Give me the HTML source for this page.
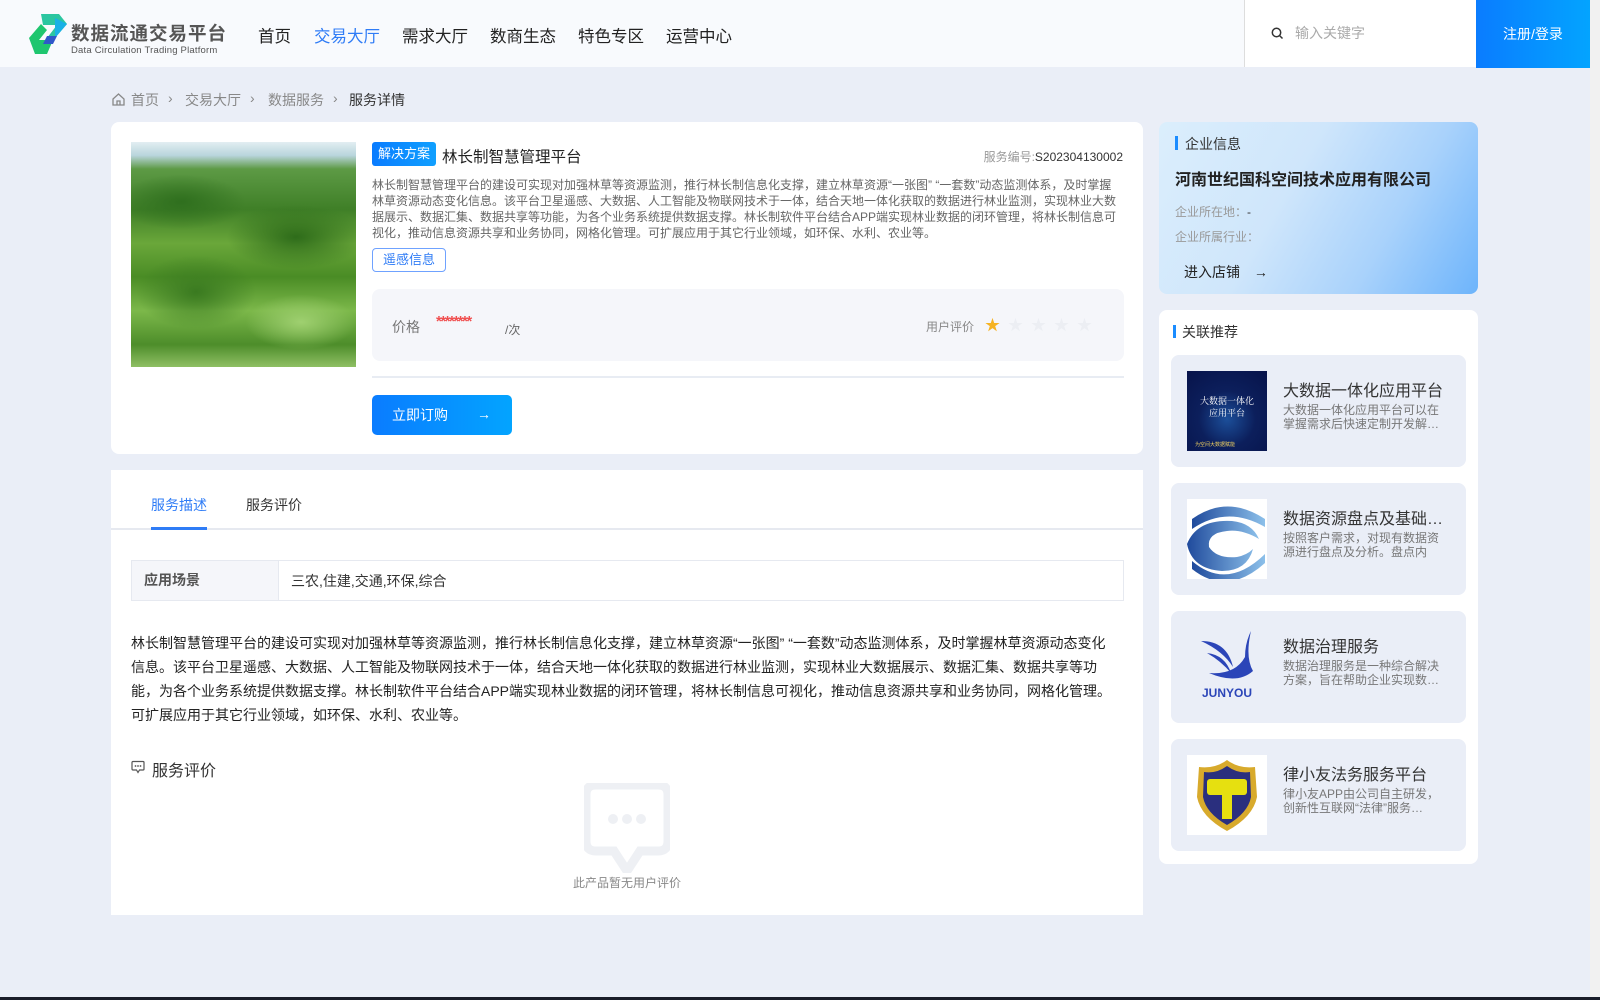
<!DOCTYPE html>
<html><head><meta charset="utf-8">
<style>
*{margin:0;padding:0;box-sizing:border-box}
body{width:1600px;height:1000px;background:#eaeef7;font-family:"Liberation Sans","Noto Sans CJK SC",sans-serif;color:#333;position:relative;overflow:hidden}
.abs{position:absolute}
.hdr{left:0;top:0;width:1590px;height:67px;background:#f8fafd}
.nav{top:23px;font-size:16.5px;color:#222}
.bc{top:90px;font-size:14px;color:#888}
.card{background:#fff;border-radius:8px}
.desc{font-size:12px;line-height:16px;color:#666}
.item{left:1171px;width:295px;height:112px;background:#eaeef7;border-radius:8px}
.item .pic{position:absolute;left:16px;top:16px;width:80px;height:80px;background:#fff;overflow:hidden}
.item .t{position:absolute;left:112px;top:22px;font-size:16px;color:#333;white-space:nowrap}
.item .d{position:absolute;left:112px;top:48px;width:166px;height:28px;overflow:hidden;font-size:12px;line-height:14px;color:#777}
</style></head><body>
<div class="abs hdr"></div>
<svg class="abs" style="left:29px;top:14px" width="40" height="40" viewBox="0 0 40 40">
<polygon points="12,0 30,0 38,10 26,24 18,24 28,11 14,11" fill="#2bc6a0"/>
<polygon points="26,4 38,10 26,24" fill="#19b1e6"/>
<polygon points="0,24 12,10 18,16 10,26 24,26 18,40 6,40" fill="#1fc66f"/>
<polygon points="18,22 28,22 24,30 14,30" fill="#2f58c9"/>
</svg>
<div class="abs" style="left:71px;top:20px;font-size:18.5px;font-weight:bold;color:#555;letter-spacing:1px">数据流通交易平台</div>
<div class="abs" style="left:71px;top:45px;font-size:9.5px;color:#555;letter-spacing:0.2px">Data Circulation Trading Platform</div>
<div class="abs nav" style="left:258px">首页</div>
<div class="abs nav" style="left:314px;color:#2f7cf6">交易大厅</div>
<div class="abs nav" style="left:402px">需求大厅</div>
<div class="abs nav" style="left:490px">数商生态</div>
<div class="abs nav" style="left:578px">特色专区</div>
<div class="abs nav" style="left:666px">运营中心</div>
<div class="abs" style="left:1244px;top:0;width:232px;height:67px;background:#fff;border-left:1px solid #ddd"></div>
<svg class="abs" style="left:1271px;top:27px" width="13" height="13" viewBox="0 0 13 13"><circle cx="5.5" cy="5.5" r="4.2" fill="none" stroke="#333" stroke-width="1.5"/><line x1="8.6" y1="8.6" x2="11.5" y2="11.5" stroke="#333" stroke-width="1.5"/></svg>
<div class="abs" style="left:1295px;top:23px;font-size:14px;color:#aaa">输入关键字</div>
<div class="abs" style="left:1476px;top:0;width:114px;height:68px;background:linear-gradient(90deg,#0a7cff,#03a4ff);color:#fff;font-size:14px;text-align:center;line-height:68px">注册/登录</div>
<div class="abs" style="left:1590px;top:0;width:10px;height:1000px;background:#f1f1f1"></div>
<div class="abs" style="left:0;top:997px;width:1600px;height:3px;background:#1a1d2a"></div>

<svg class="abs" style="left:111px;top:92px" width="15" height="15" viewBox="0 0 15 15"><path d="M2 7 L7.5 2 L13 7 V13 H2 Z M6 13 V9 H9 V13" fill="none" stroke="#888" stroke-width="1.3"/></svg>
<div class="abs bc" style="left:131px">首页</div>
<div class="abs bc" style="left:168px">›</div>
<div class="abs bc" style="left:185px">交易大厅</div>
<div class="abs bc" style="left:250px">›</div>
<div class="abs bc" style="left:268px">数据服务</div>
<div class="abs bc" style="left:333px">›</div>
<div class="abs bc" style="left:349px;color:#333">服务详情</div>

<div class="abs card" style="left:111px;top:122px;width:1032px;height:332px"></div>
<div class="abs" style="left:131px;top:142px;width:225px;height:225px;overflow:hidden;background:linear-gradient(180deg,#e2eef2 0%,#b9d5dc 6%,#5d9a45 12%,#3f7f27 30%,#6aa73a 45%,#4a8c25 60%,#7cb84a 75%,#4d8d2a 90%,#8fbf64 100%)">
<div style="position:absolute;left:-20px;top:30px;width:140px;height:60px;background:radial-gradient(ellipse,#2f6f1e 0%,transparent 65%)"></div>
<div style="position:absolute;left:90px;top:60px;width:150px;height:70px;background:radial-gradient(ellipse,#2e6c1a 0%,transparent 65%)"></div>
<div style="position:absolute;left:0;top:110px;width:130px;height:80px;background:radial-gradient(ellipse,#3a7a20 0%,transparent 65%)"></div>
<div style="position:absolute;left:110px;top:150px;width:120px;height:60px;background:radial-gradient(ellipse,#9fd070 0%,transparent 65%)"></div>
</div>
<div class="abs" style="left:372px;top:142px;width:64px;height:24px;background:linear-gradient(90deg,#0a7cff,#10a0ff);border-radius:3px;color:#fff;font-size:13px;line-height:24px;text-align:center">解决方案</div>
<div class="abs" style="left:442px;top:145px;font-size:15.5px;color:#222">林长制智慧管理平台</div>
<div class="abs" style="right:477px;top:148px;font-size:12px;color:#999">服务编号:<span style="color:#333">S202304130002</span></div>
<div class="abs desc" style="left:372px;top:177px;width:745px">林长制智慧管理平台的建设可实现对加强林草等资源监测，推行林长制信息化支撑，建立林草资源“一张图” “一套数”动态监测体系，及时掌握林草资源动态变化信息。该平台卫星遥感、大数据、人工智能及物联网技术于一体，结合天地一体化获取的数据进行林业监测，实现林业大数据展示、数据汇集、数据共享等功能，为各个业务系统提供数据支撑。林长制软件平台结合APP端实现林业数据的闭环管理，将林长制信息可视化，推动信息资源共享和业务协同，网格化管理。可扩展应用于其它行业领域，如环保、水利、农业等。</div>
<div class="abs" style="left:372px;top:248px;width:74px;height:24px;border:1px solid #6fa2ff;border-radius:4px;color:#2f7cf6;font-size:13px;line-height:22px;text-align:center">遥感信息</div>
<div class="abs" style="left:372px;top:289px;width:752px;height:72px;background:#f5f6fa;border-radius:8px"></div>
<div class="abs" style="left:392px;top:317px;font-size:14px;color:#777">价格</div>
<div class="abs" style="left:436px;top:315px;font-size:15px;color:#f05050;font-weight:bold;letter-spacing:-1.5px;line-height:14px">********</div>
<div class="abs" style="left:505px;top:321px;font-size:12px;color:#666">/次</div>
<div class="abs" style="left:926px;top:318px;font-size:12px;color:#888">用户评价</div>
<div class="abs" style="left:985px;top:314px;font-size:15px;letter-spacing:8px;color:#eceef3"><span style="color:#f6b322">★</span>★★★★</div>
<div class="abs" style="left:372px;top:376px;width:752px;height:2px;background:#e8ecf3"></div>
<div class="abs" style="left:372px;top:395px;width:140px;height:40px;background:linear-gradient(90deg,#0a7cff,#03a4ff);border-radius:5px;color:#fff;font-size:14px;line-height:40px;padding-left:20px">立即订购<span style="position:absolute;left:105px;top:-1px">→</span></div>

<div class="abs card" style="left:111px;top:470px;width:1032px;height:445px;border-radius:0"></div>
<div class="abs" style="left:151px;top:495px;font-size:14px;color:#2f7cf6">服务描述</div>
<div class="abs" style="left:246px;top:495px;font-size:14px;color:#333">服务评价</div>
<div class="abs" style="left:111px;top:528px;width:1032px;height:2px;background:#e6e9f0"></div>
<div class="abs" style="left:151px;top:527px;width:56px;height:3px;background:#2f7cf6"></div>
<div class="abs" style="left:131px;top:560px;width:993px;height:41px;border:1px solid #e6e9f0"></div>
<div class="abs" style="left:132px;top:561px;width:147px;height:39px;background:#f5f6fa;border-right:1px solid #e6e9f0;font-size:14px;color:#555;font-weight:bold;line-height:39px;padding-left:12px">应用场景</div>
<div class="abs" style="left:291px;top:571px;font-size:14px;color:#333">三农,住建,交通,环保,综合</div>
<div class="abs" style="left:131px;top:631px;width:985px;font-size:14px;line-height:24px;color:#222">林长制智慧管理平台的建设可实现对加强林草等资源监测，推行林长制信息化支撑，建立林草资源“一张图” “一套数”动态监测体系，及时掌握林草资源动态变化信息。该平台卫星遥感、大数据、人工智能及物联网技术于一体，结合天地一体化获取的数据进行林业监测，实现林业大数据展示、数据汇集、数据共享等功能，为各个业务系统提供数据支撑。林长制软件平台结合APP端实现林业数据的闭环管理，将林长制信息可视化，推动信息资源共享和业务协同，网格化管理。可扩展应用于其它行业领域，如环保、水利、农业等。</div>
<svg class="abs" style="left:131px;top:760px" width="14" height="14" viewBox="0 0 14 14"><path d="M2 1.5 H12 Q13 1.5 13 2.5 V9 Q13 10 12 10 H8.5 L7 12.5 L5.5 10 H2 Q1 10 1 9 V2.5 Q1 1.5 2 1.5Z" fill="none" stroke="#555" stroke-width="1.2"/><circle cx="4.5" cy="6" r=".9" fill="#555"/><circle cx="7" cy="6" r=".9" fill="#555"/><circle cx="9.5" cy="6" r=".9" fill="#555"/></svg>
<div class="abs" style="left:152px;top:757px;font-size:16px;color:#333">服务评价</div>
<svg class="abs" style="left:584px;top:783px" width="86" height="90" viewBox="0 0 86 90"><path d="M12 2 H74 Q84 2 84 12 V58 Q84 68 74 68 H56 L43 88 L30 68 H12 Q2 68 2 58 V12 Q2 2 12 2Z" fill="none" stroke="#eef0f4" stroke-width="9"/><circle cx="29" cy="36" r="5" fill="#eef0f4"/><circle cx="43" cy="36" r="5" fill="#eef0f4"/><circle cx="57" cy="36" r="5" fill="#eef0f4"/></svg>
<div class="abs" style="left:573px;top:874px;font-size:12px;color:#888">此产品暂无用户评价</div>

<div class="abs" style="left:1159px;top:122px;width:319px;height:172px;border-radius:8px;background:linear-gradient(120deg,#dbeefc 0%,#cfe6fb 40%,#a9d2fb 70%,#6db4fb 100%)"></div>
<div class="abs" style="left:1175px;top:136px;width:3px;height:14px;background:#1b8cff"></div>
<div class="abs" style="left:1185px;top:134px;font-size:14px;color:#333">企业信息</div>
<div class="abs" style="left:1175px;top:166px;font-size:16px;color:#222;font-weight:bold">河南世纪国科空间技术应用有限公司</div>
<div class="abs" style="left:1175px;top:203px;font-size:12px;color:#999">企业所在地：<span style="color:#333">-</span></div>
<div class="abs" style="left:1175px;top:228px;font-size:12px;color:#999">企业所属行业：</div>
<div class="abs" style="left:1184px;top:262px;font-size:14px;color:#222">进入店铺 <span style="margin-left:10px">→</span></div>

<div class="abs card" style="left:1159px;top:310px;width:319px;height:554px"></div>
<div class="abs" style="left:1173px;top:325px;width:3px;height:13px;background:#1b8cff"></div>
<div class="abs" style="left:1182px;top:322px;font-size:14px;color:#333">关联推荐</div>

<div class="abs item" style="top:355px"><div class="pic" style="background:radial-gradient(circle at 50% 60%,#1c4f9a 0%,#0c1f5c 45%,#07134a 100%)"><div style="position:absolute;left:8px;top:24px;color:#fff;font-size:9px;font-family:'Noto Serif CJK SC',serif;line-height:12px;text-align:center;width:64px">大数据一体化<br>应用平台</div><div style="position:absolute;left:8px;top:70px;color:#f0d060;font-size:5px">为空间大数据赋能</div></div><div class="t">大数据一体化应用平台</div><div class="d">大数据一体化应用平台可以在掌握需求后快速定制开发解…</div></div>
<div class="abs item" style="top:483px"><div class="pic"><svg width="80" height="80" viewBox="0 0 80 80"><defs><linearGradient id="g1" x1="0" x2="1"><stop offset="0" stop-color="#1f4a9c"/><stop offset="1" stop-color="#8cc0ea"/></linearGradient></defs><path d="M5 20 Q40 -5 78 20 L78 28 Q40 6 5 30Z" fill="url(#g1)"/><path d="M0 45 Q10 20 45 22 Q65 24 72 40 Q55 30 40 32 Q20 34 22 48 Q30 60 50 58 Q60 56 66 50 Q60 72 35 72 Q5 70 0 45Z" fill="url(#g1)"/><path d="M5 62 Q40 92 78 55 L78 64 Q40 98 5 70Z" fill="url(#g1)"/></svg></div><div class="t">数据资源盘点及基础…</div><div class="d">按照客户需求，对现有数据资源进行盘点及分析。盘点内容：…</div></div>
<div class="abs item" style="top:611px"><div class="pic" style="background:transparent"><svg width="80" height="80" viewBox="0 0 80 80"><path d="M14 14 Q40 14 46 40 Q36 24 14 14Z" fill="#2b45b8"/><path d="M20 26 Q38 28 44 46 Q34 34 20 26Z" fill="#2b45b8"/><path d="M64 4 Q58 30 66 44 Q50 58 22 46 Q48 48 58 30 Q58 16 64 4Z" fill="#2b45b8"/><text x="40" y="70" text-anchor="middle" font-size="12" font-weight="bold" fill="#2b45b8" font-family="Liberation Sans">JUNYOU</text></svg></div><div class="t">数据治理服务</div><div class="d">数据治理服务是一种综合解决方案，旨在帮助企业实现数…</div></div>
<div class="abs item" style="top:739px"><div class="pic"><svg width="80" height="80" viewBox="0 0 80 80"><path d="M40 5 Q52 14 68 12 L70 42 Q66 62 40 76 Q14 62 10 42 L12 12 Q28 14 40 5Z" fill="#d8aa2c"/><path d="M40 11 Q51 19 63 17 L64 42 Q61 58 40 70 Q19 58 16 42 L17 17 Q29 19 40 11Z" fill="#2a2f7e"/><rect x="20" y="24" width="40" height="16" rx="3" fill="#e6e010"/><rect x="35" y="38" width="10" height="26" fill="#e6e010"/></svg></div><div class="t">律小友法务服务平台</div><div class="d">律小友APP由公司自主研发，创新性互联网“法律”服务…</div></div>
</body></html>
